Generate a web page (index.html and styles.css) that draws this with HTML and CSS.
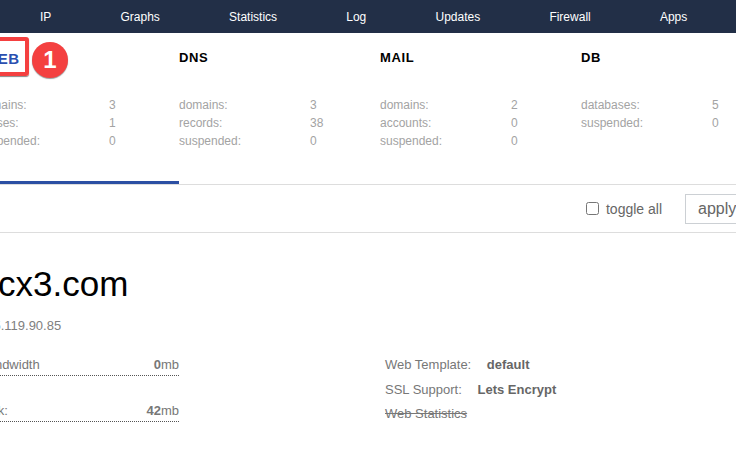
FILE: index.html
```html
<!DOCTYPE html>
<html lang="en">
<head>
    <meta charset="UTF-8">
    <meta name="viewport" content="width=device-width, initial-scale=1.0">
    <title>Web domains</title>
    <link rel="stylesheet" href="styles.css">
</head>
<body>
    <nav class="top-nav">
        <a href="#">IP</a>
        <a href="#">Graphs</a>
        <a href="#">Statistics</a>
        <a href="#">Log</a>
        <a href="#">Updates</a>
        <a href="#">Firewall</a>
        <a href="#">Apps</a>
    </nav>

    <div class="tabs">
        <div class="tab active">
            <h4>WEB</h4>
            <div class="stat"><span>domains:</span><span>3</span></div>
            <div class="stat"><span>aliases:</span><span>1</span></div>
            <div class="stat"><span>suspended:</span><span>0</span></div>
        </div>
        <div class="tab">
            <h4>DNS</h4>
            <div class="stat"><span>domains:</span><span>3</span></div>
            <div class="stat"><span>records:</span><span>38</span></div>
            <div class="stat"><span>suspended:</span><span>0</span></div>
        </div>
        <div class="tab">
            <h4>MAIL</h4>
            <div class="stat"><span>domains:</span><span>2</span></div>
            <div class="stat"><span>accounts:</span><span>0</span></div>
            <div class="stat"><span>suspended:</span><span>0</span></div>
        </div>
        <div class="tab">
            <h4>DB</h4>
            <div class="stat"><span>databases:</span><span>5</span></div>
            <div class="stat"><span>suspended:</span><span>0</span></div>
        </div>
    </div>

    <div class="toolbar">
        <label class="toggle"><input type="checkbox"> toggle all</label>
        <select class="apply">
            <option>apply to selected</option>
        </select>
    </div>

    <div class="domain">
        <h1>cx3.com</h1>
        <div class="ip">185.119.90.85</div>
        <div class="details">
            <div class="usage">
                <div class="usage-row"><span>Bandwidth</span><span><b>0</b>mb</span></div>
                <div class="usage-row"><span>Disk:</span><span><b>42</b>mb</span></div>
            </div>
            <div class="props">
                <div class="prop">Web Template: <b>default</b></div>
                <div class="prop">SSL Support: <b>Lets Encrypt</b></div>
                <div class="prop off">Web Statistics</div>
            </div>
        </div>
    </div>

    <div class="callout"></div>
    <div class="badge">1</div>
</body>
</html>
```

FILE: styles.css
```css
html, body {
    height: 100%;
    overflow: hidden;
}

body {
    font-family: "Liberation Sans", Arial, sans-serif;
    margin: 0;
    padding: 0;
    background-color: white;
    color: #666;
    position: relative;
}

.top-nav {
    display: flex;
    height: 33px;
    padding-left: 5.4px;
    align-items: center;
    background-color: #222f47;
}

.top-nav a {
    padding: 0 34.6px;
    font-size: 12px;
    color: white;
    text-decoration: none;
}

.tabs {
    display: flex;
    height: 151px;
    margin-left: -22px;
    border-bottom: 1px solid #ddd;
}

.tab {
    flex: 0 0 201px;
    box-sizing: border-box;
    height: 151px;
    padding-top: 17px;
}

.tab.active {
    border-bottom: 3px solid #2c4fa3;
}

.tab h4 {
    margin: 0 0 31px;
    font-size: 13px;
    line-height: 15px;
    letter-spacing: 0.6px;
    color: black;
}

.tab.active h4 {
    margin: 1px 0 30px 5px;
    font-size: 15px;
    color: #2a4fb0;
}

.stat {
    display: flex;
    width: 137px;
    justify-content: space-between;
    font-size: 12px;
    line-height: 18px;
    color: #a3a3a3;
}

.stat span:last-child {
    width: 6px;
    white-space: nowrap;
}

.toolbar {
    display: flex;
    height: 47px;
    justify-content: flex-end;
    align-items: center;
    margin-right: -60px;
    border-bottom: 1px solid #ddd;
}

.toggle {
    display: flex;
    align-items: center;
    margin-right: 23px;
    font-size: 14px;
    color: #666;
}

.toggle input {
    width: 13px;
    height: 13px;
    margin: 0 7px 0 0;
}

.apply {
    appearance: none;
    width: 111px;
    height: 30px;
    padding: 0 12px;
    border: 1px solid #ccd0d4;
    border-radius: 0;
    background-color: white;
    font-family: inherit;
    font-size: 16px;
    color: #666;
}

.domain {
    margin-left: -21px;
}

.domain h1 {
    margin: 31px 0 0 19px;
    font-size: 35px;
    line-height: 40px;
    font-weight: normal;
    color: black;
}

.ip {
    margin-top: 14px;
    font-size: 13px;
    line-height: 15px;
    color: #808080;
}

.details {
    display: flex;
    margin-top: 24px;
}

.usage {
    width: 200px;
    margin-right: 206px;
}

.usage-row {
    display: flex;
    justify-content: space-between;
    height: 18px;
    margin-bottom: 27px;
    font-size: 13px;
    line-height: 16px;
    color: #777;
    border-bottom: 1px dotted #555;
}

.prop {
    height: 24.5px;
    font-size: 13px;
    line-height: 16px;
    color: #777;
}

.prop b {
    margin-left: 12px;
    color: #666;
}

.prop.off {
    text-decoration: line-through;
}

/* annotation drawn over the screenshot */
.callout {
    position: absolute;
    left: -20px;
    top: 37px;
    width: 41px;
    height: 31px;
    border: 4px solid #f44040;
    border-radius: 3px;
    box-shadow: 0 1px 1px #888;
}

.badge {
    position: absolute;
    left: 32px;
    top: 42px;
    width: 36px;
    height: 36px;
    border-radius: 50%;
    background-color: #f44040;
    box-shadow: 0 1px 1px #999;
    font-size: 24px;
    font-weight: bold;
    line-height: 36px;
    text-align: center;
    color: white;
}
```
